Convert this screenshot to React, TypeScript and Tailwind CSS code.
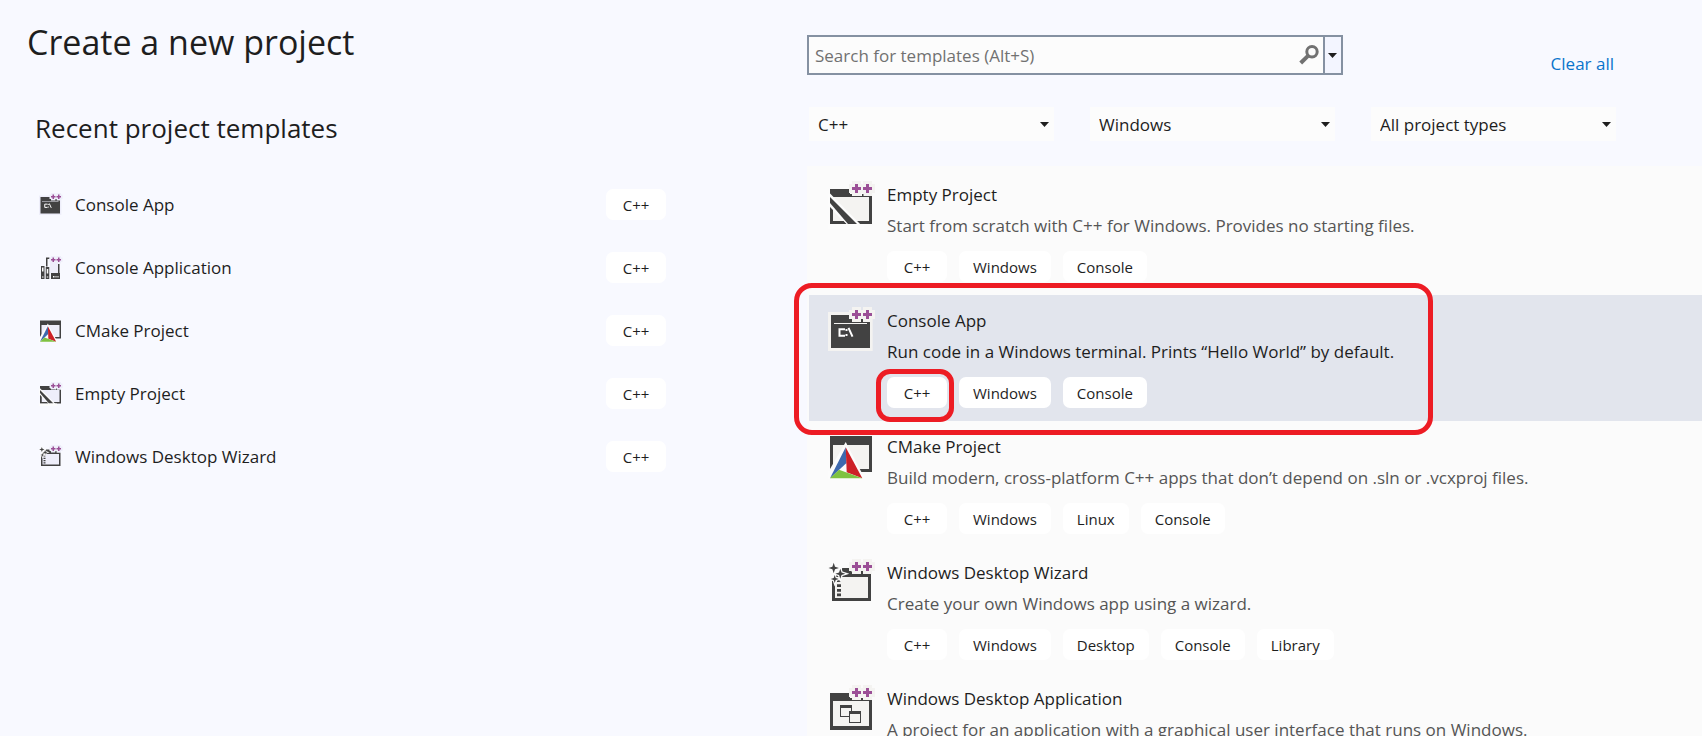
import React from "react";

type IconName = "empty" | "console" | "legacy" | "cmake" | "wizard" | "desktop";

interface Template {
  name: string;
  icon: IconName;
  description: string;
  tags: string[];
  selected?: boolean;
}

const recent: { name: string; icon: IconName }[] = [
  { name: "Console App", icon: "console" },
  { name: "Console Application", icon: "legacy" },
  { name: "CMake Project", icon: "cmake" },
  { name: "Empty Project", icon: "empty" },
  { name: "Windows Desktop Wizard", icon: "wizard" },
];

const templates: Template[] = [
  {
    name: "Empty Project",
    icon: "empty",
    description: "Start from scratch with C++ for Windows. Provides no starting files.",
    tags: ["C++", "Windows", "Console"],
  },
  {
    name: "Console App",
    icon: "console",
    description: "Run code in a Windows terminal. Prints “Hello World” by default.",
    tags: ["C++", "Windows", "Console"],
    selected: true,
  },
  {
    name: "CMake Project",
    icon: "cmake",
    description: "Build modern, cross-platform C++ apps that don’t depend on .sln or .vcxproj files.",
    tags: ["C++", "Windows", "Linux", "Console"],
  },
  {
    name: "Windows Desktop Wizard",
    icon: "wizard",
    description: "Create your own Windows app using a wizard.",
    tags: ["C++", "Windows", "Desktop", "Console", "Library"],
  },
  {
    name: "Windows Desktop Application",
    icon: "desktop",
    description: "A project for an application with a graphical user interface that runs on Windows.",
    tags: [],
  },
];

const INK = "#424242";

function PlusPlus() {
  return (
    <>
      <path fill="currentColor" d="M24 0h9v3h2V0h9v3h3v9h-3v3h-9v-3h-2v3h-9v-3h-3V3h3z" />
      <path fill="#9b4f96" d="M27 3h3v3h3v3h-3v3h-3V9h-3V6h3zM38 3h3v3h3v3h-3v3h-3V9h-3V6h3z" />
    </>
  );
}

function sparkle(x: number, y: number, r: number) {
  const s = r / 4;
  return `M${x} ${y - r}L${x + s} ${y - s}L${x + r} ${y}L${x + s} ${y + s}L${x} ${y + r}L${x - s} ${y + s}L${x - r} ${y}L${x - s} ${y - s}Z`;
}

function TemplateIcon({ name, className }: { name: IconName; className: string }) {
  return (
    <svg viewBox="0 0 48 48" className={className} aria-hidden="true">
      {name === "empty" && (
        <>
          <path fill={INK} d="M2 8h20v5h10v2h12v28H2z" />
          <path fill="currentColor" d="M5 16h36v24H5z" />
          <path stroke="#fcfcfc" strokeWidth="10" d="M-2 15.500L30 48" />
          <path fill={INK} d="M2 26l3 3v11h10.500l3 3H2z" />
          <path fill={INK} d="M2 16v6l18 21h9z" />
          <path fill="#fcfcfc" d="M0 43h36v5H0z" />
          <PlusPlus />
          <path fill={INK} d="M34 13h1.500v3H34z" />
        </>
      )}
      {name === "console" && (
        <>
          <path fill="currentColor" d="M0 5h44.700v39H0z" />
          <path fill={INK} d="M3 8h39v33H3z" />
          <path fill="currentColor" d="M6 16h33v1H6z" />
          <path fill="none" stroke="#fff" strokeWidth="2" d="M17 22.300h-5.500v6.500H17M20.500 20.900l4 8.800" />
          <path fill="#fff" d="M17.500 22h2v2h-2zM17.500 27h2v2h-2z" />
          <PlusPlus />
          <path fill={INK} d="M33.500 13h1.500v2h-1.500z" />
        </>
      )}
      {name === "legacy" && (
        <>
          <path fill="currentColor" d="M22 10h16v24H22z" />
          <path fill="none" stroke={INK} strokeWidth="3" d="M15.500 21V4.500H21M39.500 16v20" />
          <path fill={INK} d="M4 20h7v26H4zM13.500 22h7v24h-7zM24 34h18v12H24z" />
          <path fill="#fcfcfc" d="M6 23h3v8H6zM6 41h3v2H6zM15.500 26h3v9h-3zM15.500 41h3v2h-3zM28 40h3v3h-3zM33 40h2v3h-2zM37 40h2v3h-2z" />
          <PlusPlus />
        </>
      )}
      {name === "cmake" && (
        <>
          <path fill={INK} d="M2 3h42v36H2z" />
          <path fill="currentColor" d="M5 12h36v24H5z" />
          <path fill="#fcfcfc" d="M17.700 9L37 46H0V39.500z" />
          <path fill="#3e69ae" d="M17.700 14.300L2 45.300l16.500-15.300z" />
          <path fill="#cd2027" d="M17.700 14.300l16.600 31-15.600-6z" />
          <path fill="#7fc241" d="M2 45.300h32.300L11 36.800z" />
        </>
      )}
      {name === "wizard" && (
        <>
          <path fill={INK} d="M14 9h7l3 4h10v2h9v27H4V20h3v-5h7z" />
          <path fill="currentColor" d="M7 18h33v21H7z" />
          <path fill={INK} d="M9 20.500h4V23H9zM9 25.300h4V28H9zM9 30h4v2.700H9zM9 34.500h4v2.700H9z" />
          <path fill="#fcfcfc" d={sparkle(5.7, 9, 9) + sparkle(12.3, 14.7, 9) + sparkle(6.7, 20, 7.5)} />
          <path fill={INK} d={sparkle(5.7, 9, 5.2) + sparkle(12.3, 14.7, 5) + sparkle(6.7, 20, 4)} />
          <PlusPlus />
          <path fill={INK} d="M33 12h2v4h-2z" />
        </>
      )}
      {name === "desktop" && (
        <>
          <path fill={INK} d="M2 8h20v5h2v2h20v30H2z" />
          <path fill="currentColor" d="M5 16h36v25H5z" />
          <path fill={INK} d="M12 20h12v12H12z" />
          <path fill="currentColor" d="M13 23h10v8H13z" />
          <path fill={INK} d="M21 26h12v12H21z" />
          <path fill="currentColor" d="M22 29h10v8H22z" />
          <PlusPlus />
          <path fill={INK} d="M33 13h2v3h-2z" />
        </>
      )}
    </svg>
  );
}

function Caret({ className = "" }: { className?: string }) {
  return (
    <svg viewBox="0 0 9 5" className={`h-[5px] w-[9px] ${className}`} aria-hidden="true">
      <path fill="#1e1e1e" d="M0 0h9L4.500 5z" />
    </svg>
  );
}

function Tag({ children, marked }: { children: React.ReactNode; marked?: boolean }) {
  return (
    <span className="relative flex h-[31px] min-w-[60px] items-center justify-center rounded-[7px] bg-white px-3.5 text-[15px] leading-5">
      {children}
      {marked && (
        <span className="pointer-events-none absolute -bottom-3.5 -left-[11px] -right-[7px] -top-2 rounded-[14px] border-[5px] border-[#ed1c24]" />
      )}
    </span>
  );
}

function Filter({ label, options }: { label: string; options: string[] }) {
  return (
    <div className="relative">
      <select
        aria-label={label}
        className="block h-[34px] w-full appearance-none bg-[#fcfcfc] px-[9px] pt-0.5 text-[17px] leading-6 text-[#1e1e1e] outline-none"
      >
        {options.map((o) => (
          <option key={o}>{o}</option>
        ))}
      </select>
      <Caret className="pointer-events-none absolute right-[5px] top-[15px]" />
    </div>
  );
}

function TemplateRow({ template }: { template: Template }) {
  const { name, icon, description, tags, selected } = template;
  return (
    <li
      className={`relative ml-0.5 flex h-[126px] gap-[11px] pl-[19px] pt-3 ${selected ? "z-10 bg-[#e2e5ed]" : ""}`}
    >
      <TemplateIcon name={icon} className="size-12 shrink-0 text-[#f4f3f1]" />
      <div className="min-w-0 pt-0.5">
        <h3 className="text-[17px] leading-6">{name}</h3>
        <p className={`mt-[7px] whitespace-nowrap text-[17px] leading-6 ${selected ? "" : "text-[#555555]"}`}>
          {description}
        </p>
        <div className="mt-[13px] flex gap-3">
          {tags.map((t) => (
            <Tag key={t} marked={selected && t === "C++"}>
              {t}
            </Tag>
          ))}
        </div>
      </div>
      {selected && (
        <div className="pointer-events-none absolute -left-[15px] -top-3 h-[152px] w-[639px] rounded-[18px] border-[5px] border-[#ed1c24]" />
      )}
    </li>
  );
}

export default function App() {
  return (
    <main className="grid h-screen grid-cols-[807fr_895fr] overflow-hidden bg-[#f8f9ff] font-['Open_Sans','Noto_Sans',sans-serif] text-[#1e1e1e]">
      <section className="pl-[27px] pt-[19px]">
        <h1 className="text-[34px] leading-[46px]">Create a new project</h1>
        <div className="pl-2 pr-[141px] pt-[43px]">
          <h2 className="text-[26px] leading-10">Recent project templates</h2>
          <ul className="mt-[25px] pl-1">
            {recent.map((r) => (
              <li key={r.name} className="flex h-[63px] items-center">
                <TemplateIcon name={r.icon} className="size-6 shrink-0 text-[#eeeefa]" />
                <span className="ml-3 flex-1 text-[17px] leading-6">{r.name}</span>
                <Tag>C++</Tag>
              </li>
            ))}
          </ul>
        </div>
      </section>

      <section className="flex min-h-0 min-w-0 flex-col pt-[35px]">
        <div className="flex h-10 items-start justify-between pr-[88px]">
          <div className="flex h-10 w-[536px] border-2 border-[#8591a2] bg-[#fcfcfc]">
            <input
              type="text"
              aria-label="Search for templates"
              placeholder="Search for templates (Alt+S)"
              className="min-w-0 flex-1 bg-transparent px-1.5 pt-0.5 text-[17px] leading-6 outline-none placeholder:text-[#717171]"
            />
            <button type="button" aria-label="Search" className="flex w-6 items-start pt-2">
              <svg viewBox="0 0 20 20" className="size-5" fill="none" stroke="#717171" aria-hidden="true">
                <circle cx="13" cy="6.700" r="5.200" strokeWidth="3" />
                <path d="M9.500 10.300L1.700 18" strokeWidth="4" />
              </svg>
            </button>
            <button
              type="button"
              aria-label="Search history"
              className="flex w-[18px] items-center justify-center border-l-2 border-[#8591a2] bg-[#f3f5ff] pr-0.5"
            >
              <Caret />
            </button>
          </div>
          <a href="#clear" className="mt-[17px] text-[17px] leading-6 text-[#0a74cc]">
            Clear all
          </a>
        </div>

        <div className="mt-8 grid grid-cols-3 gap-9 pl-0.5 pr-[86px]">
          <Filter label="Language" options={["C++", "C#", "Python"]} />
          <Filter label="Platform" options={["Windows", "Linux", "Android"]} />
          <Filter label="Project type" options={["All project types", "Console", "Desktop"]} />
        </div>

        <div className="-ml-4 mt-[25px] min-h-0 flex-1 overflow-y-auto overflow-x-hidden pl-4 [scrollbar-width:none]">
          <ul className="bg-[#fbfbfb] pt-[3px]">
            {templates.map((t) => (
              <TemplateRow key={t.name} template={t} />
            ))}
          </ul>
        </div>
      </section>
    </main>
  );
}
